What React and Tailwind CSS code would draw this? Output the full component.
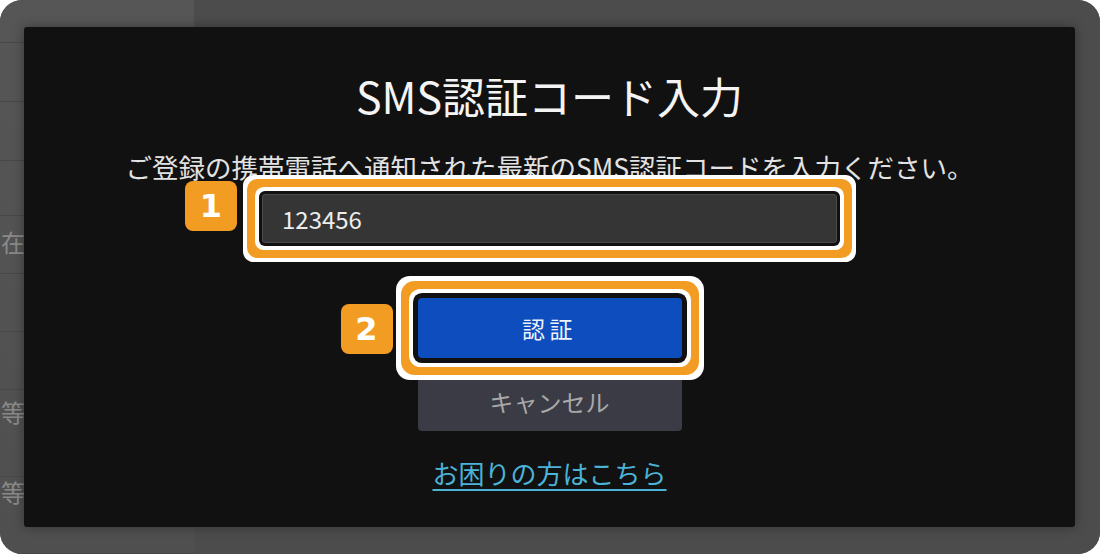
const jp = { fontFamily: '"Noto Sans CJK JP", "Noto Sans", sans-serif' }

function Badge({ n, className }) {
  return (
    <div
      className={`absolute flex h-[50px] w-[52px] items-center justify-center rounded-[8px] bg-[#f39c24] text-[32px] font-bold leading-none text-white ${className}`}
      style={{ fontFamily: '"DejaVu Sans", sans-serif' }}
    >
      {n}
    </div>
  )
}

// heights of the table rows behind the overlay, and where their text sits
const rows = [43, 59, 59, 55, 58, 58, 58, 87, 77]
const rowText = { 4: ['在', 'pt-[14px]'], 7: ['等', 'pt-[10px]'], 8: ['等', 'pt-[3px]'] }

export default function App() {
  return (
    <div className="h-[554px] w-[1100px] bg-white" style={jp}>
      <div className="relative flex h-full overflow-hidden rounded-[22px] bg-[#4d4d4d]">
        {/* dimmed page behind the dialog */}
        <div className="flex w-[194px] flex-col bg-gradient-to-b from-[#565656] to-[#4f4f4f]">
          {rows.map((h, i) => (
            <div
              key={i}
              className={`flex shrink-0 items-start border-b border-[#484848] text-[24px] text-[#8a8a8a] ${rowText[i] ? rowText[i][1] : ''}`}
              style={{ height: h }}
            >
              {rowText[i] && <span className="pl-[1px] leading-none">{rowText[i][0]}</span>}
            </div>
          ))}
        </div>
        <div className="flex-1 bg-[#4c4c4c]" />

        {/* dialog */}
        <div className="absolute left-[24px] top-[27px] flex h-[500px] w-[1051px] flex-col items-center rounded-[3px] bg-[#111111] shadow-[0_0_12px_rgba(0,0,0,0.35)]">
          <h1 className="mt-[42px] text-[43px] font-normal leading-[52px] text-[#f4f4f4]">SMS認証コード入力</h1>
          <p className="mt-[30px] text-[26.5px] leading-[32px] text-[#e2e2e2]">
            ご登録の携帯電話へ通知された最新のSMS認証コードを入力ください。
          </p>

          <div className="relative mt-[11px]">
            <input
              readOnly
              value="123456"
              className="block h-[49px] w-[575px] rounded-[3px] border border-[#4a4a4a] bg-[#353535] px-[19px] text-[24px] text-[#ececec] outline-none shadow-[0_0_0_3px_#111111,0_0_0_7px_#ffffff,0_0_0_15px_#f39c24,0_0_0_19px_#ffffff]"
              style={jp}
            />
            <Badge n="1" className="left-[-77px] top-[-13px]" />
          </div>

          <div className="mt-[55px] flex flex-col gap-[12px]">
            <div className="relative">
              <button className="block h-[60px] w-[264px] rounded-[4px] bg-[#0d4dbd] text-[23px] tracking-[0.2em] text-[#eef2fb] shadow-[0_0_0_5px_#111111,0_0_0_9px_#ffffff,0_0_0_17px_#f39c24,0_0_0_22px_#ffffff]">
                認証
              </button>
              <Badge n="2" className="left-[-77px] top-[6px]" />
            </div>
            <button className="block h-[61px] w-[264px] rounded-[4px] bg-[#3a3b44] pt-[2px] text-[24px] text-[#a8a8a8]">
              キャンセル
            </button>
          </div>

          <a href="#" className="mt-[26px] text-[26px] leading-[32px] text-[#4ab3d7] underline underline-offset-[5px]">
            お困りの方はこちら
          </a>
        </div>
      </div>
    </div>
  )
}
